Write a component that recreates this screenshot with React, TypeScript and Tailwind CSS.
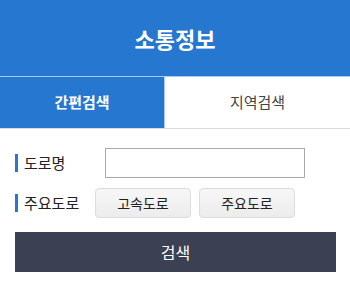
export default function App() {
  const font = { fontFamily: '"Noto Sans CJK KR", "Noto Sans", sans-serif' };
  return (
    <div className="w-[350px] h-[303px] bg-white" style={font}>
      <div className="h-[77px] bg-[#2677d0] flex items-center justify-center border-b border-[#a9cdf0]">
        <h1 className="text-white text-[22px] font-bold leading-none">소통정보</h1>
      </div>
      <div className="flex h-[52px] border-b border-[#d9dde2]">
        <div className="w-[165px] bg-[#2677d0] flex items-center justify-center text-white text-[15px] font-bold border-r border-[#a9cdf0]">
          간편검색
        </div>
        <div className="flex-1 flex items-center justify-center text-[#444] text-[15px]">
          지역검색
        </div>
      </div>
      <div className="px-[15px] pt-[19px]">
        <div className="flex items-center h-[30px]">
          <div className="w-[90px] flex items-center">
            <span className="w-[3px] h-[18px] bg-[#2677d0] mr-[6px]" />
            <span className="text-[15px] text-[#222]">도로명</span>
          </div>
          <input className="w-[200px] h-[30px] border border-[#aaa] outline-none" />
        </div>
        <div className="flex items-center h-[30px] mt-[10px]">
          <div className="w-[80px] flex items-center">
            <span className="w-[3px] h-[18px] bg-[#2677d0] mr-[6px]" />
            <span className="text-[15px] text-[#222]">주요도로</span>
          </div>
          <div className="flex gap-[8px]">
            <button className="w-[96px] h-[30px] rounded-[4px] border border-[#dcdcdc] bg-gradient-to-b from-[#f7f7f7] to-[#ececec] text-[14px] text-[#222]">
              고속도로
            </button>
            <button className="w-[96px] h-[30px] rounded-[4px] border border-[#dcdcdc] bg-gradient-to-b from-[#f7f7f7] to-[#ececec] text-[14px] text-[#222]">
              주요도로
            </button>
          </div>
        </div>
        <button className="mt-[14px] w-[321px] h-[40px] bg-[#3b4052] text-white text-[16px]">
          검색
        </button>
      </div>
    </div>
  );
}
